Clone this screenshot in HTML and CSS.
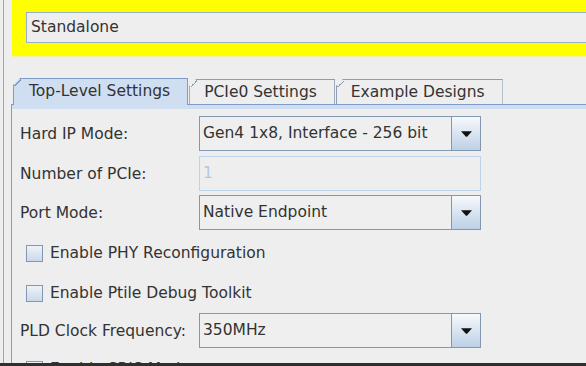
FILE: index.html
```html
<!DOCTYPE html>
<html lang="en">
<head>
    <meta charset="UTF-8">
    <meta name="viewport" content="width=device-width, initial-scale=1.0">
    <title>IP Parameter Editor</title>
    <link rel="stylesheet" href="styles.css">
</head>
<body>
    <div class="window">
        <div class="highlight">
            <div class="text-field">Standalone</div>
        </div>

        <div class="tabs">
            <div class="tab-strip">
                <div class="tab selected">Top-Level Settings</div>
                <div class="tab">PCIe0 Settings</div>
                <div class="tab">Example Designs</div>
            </div>
            <div class="tab-panel">
                <div class="panel-body">
                    <div class="row">
                        <span class="label">Hard IP Mode:</span>
                        <div class="combo">
                            <span class="combo-value">Gen4 1x8, Interface - 256 bit</span>
                            <span class="combo-button">
                                <svg width="11" height="6" viewBox="0 0 11 6"><path d="M0 0.3 H11 L6.3 5.4 Q5.5 6.1 4.7 5.4 Z" fill="#111"/></svg>
                            </span>
                        </div>
                    </div>
                    <div class="row">
                        <span class="label">Number of PCIe:</span>
                        <div class="field disabled">1</div>
                    </div>
                    <div class="row">
                        <span class="label">Port Mode:</span>
                        <div class="combo">
                            <span class="combo-value">Native Endpoint</span>
                            <span class="combo-button">
                                <svg width="11" height="6" viewBox="0 0 11 6"><path d="M0 0.3 H11 L6.3 5.4 Q5.5 6.1 4.7 5.4 Z" fill="#111"/></svg>
                            </span>
                        </div>
                    </div>
                    <div class="check-row">
                        <span class="checkbox"></span>
                        <span>Enable PHY Reconfiguration</span>
                    </div>
                    <div class="check-row">
                        <span class="checkbox"></span>
                        <span>Enable Ptile Debug Toolkit</span>
                    </div>
                    <div class="row">
                        <span class="label">PLD Clock Frequency:</span>
                        <div class="combo">
                            <span class="combo-value">350MHz</span>
                            <span class="combo-button">
                                <svg width="11" height="6" viewBox="0 0 11 6"><path d="M0 0.3 H11 L6.3 5.4 Q5.5 6.1 4.7 5.4 Z" fill="#111"/></svg>
                            </span>
                        </div>
                    </div>
                    <div class="check-row last">
                        <span class="checkbox"></span>
                        <span>Enable SRIS Mode</span>
                    </div>
                </div>
            </div>
        </div>
    </div>
    <div class="bottom-edge"></div>
</body>
</html>
```

FILE: styles.css
```css
body {
    margin: 0;
    height: 366px;
    display: flex;
    flex-direction: column;
    overflow: hidden;
    background-color: #eeeeee;
    color: #333333;
    font-family: "DejaVu Sans", Verdana, sans-serif;
    font-size: 15.5px;
}
.window {
    flex: 1;
    width: 640px;
    margin-left: 3px;
    border-left: 1px solid #a4a4a4;
    overflow: hidden;
}
.highlight {
    margin-left: 8px;
    padding: 12px 0 13px 14px;
    background-color: #ffff00;
    border-bottom: 1px solid #f2f2a6;
}
.text-field {
    height: 29px;
    line-height: 29px;
    padding-left: 4px;
    background-color: #eeeeee;
    border: 1px solid #9aaec6;
}
.tabs {
    margin: 21px 0 0 7px;
}
.tab-strip {
    display: flex;
    align-items: flex-end;
    gap: 1px;
    padding-left: 2px;
}
.tab {
    position: relative;
    height: 24px;
    line-height: 24px;
    padding: 0 17px 0 14px;
    background-color: #eeeeee;
    border: 1px solid #8d9db2;
    border-bottom: none;
    clip-path: polygon(7px 0, 100% 0, 100% 100%, 0 100%, 0 7px);
}
.tab::before {
    content: "";
    position: absolute;
    top: 0;
    left: 0;
    width: 7px;
    height: 7px;
    background: linear-gradient(to bottom right, transparent 50%, #8d9db2 50%, #8d9db2 calc(50% + 1.3px), transparent calc(50% + 1.3px));
}
.tab.selected {
    height: 26px;
    margin-bottom: -1px;
    padding-left: 15px;
    z-index: 1;
    background-color: #cfdff1;
    border-color: #7f9cc8;
}
.tab.selected::before {
    background: linear-gradient(to bottom right, transparent 50%, #7f9cc8 50%, #7f9cc8 calc(50% + 1.3px), transparent calc(50% + 1.3px));
}
.tab-panel {
    border-top: 1px solid #7f9cc8;
    border-left: 1px solid #7f9cc8;
}
.panel-body {
    border-top: 4px solid #cfdff1;
    padding: 7px 0 0 8px;
}
.row {
    display: flex;
    align-items: center;
    height: 35px;
    margin-bottom: 4px;
}
.row:first-child {
    margin-bottom: 5px;
}
.label {
    width: 179px;
}
.combo {
    display: flex;
    width: 280px;
    height: 33px;
    background-color: #efefef;
    border: 1px solid #8497b0;
}
.combo-value {
    flex: 1;
    line-height: 33px;
    padding-left: 3px;
    white-space: nowrap;
}
.combo-button {
    display: flex;
    align-items: center;
    justify-content: center;
    width: 28px;
    border-left: 1px solid #8497b0;
    background: linear-gradient(#f7f9fc, #bcd0e6);
}
.field {
    width: 277px;
    height: 33px;
    line-height: 33px;
    padding-left: 3px;
    border: 1px solid #8497b0;
}
.field.disabled {
    color: #b4c8df;
    border-color: #bfd3e8;
}
.check-row {
    display: flex;
    align-items: center;
    gap: 7px;
    height: 40px;
    padding-left: 6px;
}
.check-row:nth-child(4) {
    margin-top: -1px;
}
.check-row.last {
    margin-top: -3px;
}
.checkbox {
    width: 15px;
    height: 15px;
    border: 1px solid #8497b0;
    background: linear-gradient(#eef3f9, #c9d9ea);
}
.bottom-edge {
    height: 3px;
    background-color: #2f2f2f;
}
```
